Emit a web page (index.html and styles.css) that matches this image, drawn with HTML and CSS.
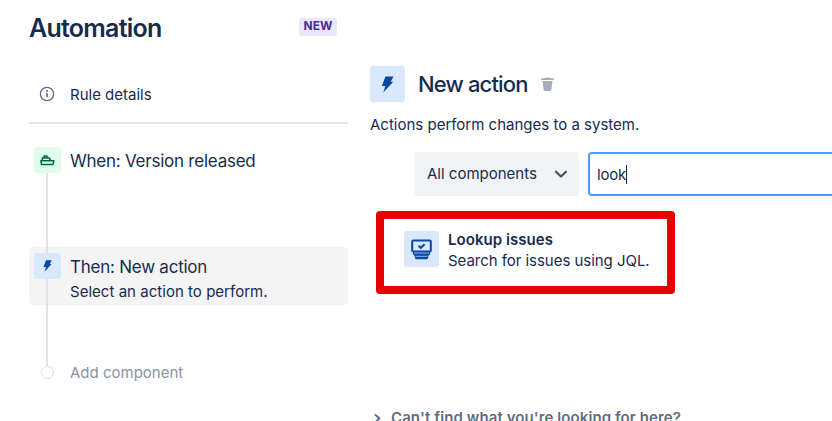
FILE: index.html
```
<!DOCTYPE html>
<html lang="en">
<head>
<meta charset="utf-8">
<title>Automation</title>
<link rel="stylesheet" href="styles.css">
</head>
<body>
<div class="app">
  <aside class="sidebar">
    <header class="heading"><h1><span>Automation</span></h1><span class="badge"><span>NEW</span></span></header>
    <div class="details">
      <svg class="info" viewBox="0 0 16 16"><circle cx="8" cy="8" r="6.6" fill="none" stroke="currentColor" stroke-width="1.3"/><circle cx="8" cy="5.1" r="1"/><rect x="7.2" y="7" width="1.7" height="4.2" rx=".6"/></svg>
      <span class="t-rule">Rule details</span>
    </div>
    <div class="steps">
      <div class="step trigger">
        <span class="tile green"><svg width="15" height="13" viewBox="0 0 15 13" fill="none" stroke="currentColor" stroke-width="1.5" stroke-linejoin="round"><path d="M.9 6.8h13l-.9 3.6H1.4zM2.3 6.5V4h6.9l1.7 2.6M4 4V2h2.8l1 2"/></svg></span>
        <span class="name t-when">When: Version released</span>
      </div>
      <div class="step action">
        <span class="tile blue"><svg width="9" height="12" viewBox="0 0 12 17"><path d="M4 .5h8L9.2 5.8h2.5L1.8 16.5l2-6.5H.3z"/></svg></span>
        <div class="copy"><span class="name t-then">Then: New action</span><span class="t-select">Select an action to perform.</span></div>
      </div>
      <div class="step add"><span class="dot"></span><span class="t-add">Add component</span></div>
    </div>
  </aside>
  <main class="content">
    <div class="title">
      <span class="tile large blue"><svg width="13" height="17" viewBox="0 0 12 17"><path d="M4 .5h8L9.2 5.8h2.5L1.8 16.5l2-6.5H.3z"/></svg></span>
      <h2><span>New action</span></h2>
      <svg class="trash" width="13" height="15" viewBox="0 0 13 15"><path d="M.9 1.3h3.4L5 .6h3l.7.7h3.4a.8.8 0 0 1 0 1.7H.9a.8.8 0 0 1 0-1.7zM1.5 4h10l-1.2 8.8a1.5 1.5 0 0 1-1.5 1.2H4.2a1.5 1.5 0 0 1-1.5-1.2z"/></svg>
    </div>
    <p class="intro"><span>Actions perform changes to a system.</span></p>
    <div class="filters">
      <div class="select"><span class="t-all">All components</span><svg width="14" height="9" viewBox="0 0 14 9" fill="none" stroke="currentColor" stroke-width="2.2" stroke-linecap="round" stroke-linejoin="round"><path d="M2 1.7l5 4.8 5-4.8"/></svg></div>
      <div class="search"><span class="t-look">look</span><i class="caret"></i></div>
    </div>
    <div class="result">
      <span class="tile large blue"><svg width="21" height="21" viewBox="0 0 21 21" fill="none" stroke="currentColor" stroke-width="2"><rect x="1.2" y="1.6" width="18.6" height="10.8" rx="1"/><path d="M7.6 6.8l2.2 2 3.8-3.6"/><path d="M2 13h17v1.8a1.5 1.5 0 0 1-1.4 1.5L17 19a1.6 1.6 0 0 1-1.5 1.3h-10A1.6 1.6 0 0 1 4 19l-.6-2.7A1.5 1.5 0 0 1 2 14.800z" fill="currentColor" stroke="none"/><path d="M3 14h15M4.500 17.300h12" stroke="#a9c3ee" stroke-width=".9"/></svg></span>
      <div class="copy"><strong class="t-lookup">Lookup issues</strong><span class="t-jql">Search for issues using JQL.</span></div>
    </div>
    <div class="help"><svg width="7" height="9" viewBox="0 0 7 9" fill="none" stroke="currentColor" stroke-width="1.9" stroke-linecap="round" stroke-linejoin="round"><path d="M1.5 1l4 3.5-4 3.5"/></svg><span class="t-help">Can't find what you're looking for here?</span></div>
  </main>
</div>
</body>
</html>
```

FILE: styles.css
```
* { box-sizing: border-box; }
body { margin: 0; background: #fff; color: #172b4d; font: 15px/20px Inter, sans-serif; overflow: hidden; }
h1, h2, p { margin: 0; }
svg { display: block; flex: none; }
span { white-space: nowrap; }
.app { display: flex; gap: 22px; height: 421px; padding-left: 29px; overflow: hidden; }
.sidebar { flex: none; width: 319px; }
.heading { display: flex; justify-content: space-between; padding: 12px 11px 0 0; height: 66px; }
h1 { font-size: 25px; line-height: 32px; font-weight: 600; letter-spacing: -.75px; }
.badge { margin-top: 6px; height: 18px; width: 38px; border-radius: 3px; background: #eae6ff; color: #403294; font-size: 12px; line-height: 16px; font-weight: 700; text-align: center; }
.details { display: flex; align-items: center; height: 58px; border-bottom: 2px solid #e6e6eb; padding-left: 10px; gap: 14px; }
.t-rule { padding: 2px 0 0 1px; }
.info { width: 16px; height: 16px; color: #5e6c84; fill: currentColor; }
.steps { position: relative; z-index: 0; padding-top: 23px; }
.steps::before { content: ""; position: absolute; left: 17px; top: 40px; width: 2px; height: 203px; background: #e2e2e8; }
.step { position: relative; display: flex; }
.tile { display: flex; flex: none; align-items: center; justify-content: center; width: 27px; height: 26px; border-radius: 3px; }
.tile svg:not([fill]) { fill: currentColor; }
.green { background: #dffcec; color: #006644; }
.blue { background: #d9e7ff; color: #0747a6; }
.large { width: 35px; height: 36px; }
.trigger { height: 100px; padding-left: 5px; gap: 9px; }
.name { font-size: 17px; line-height: 26px; letter-spacing: -.24px; }
.t-when { padding-top: 1px; }
.action { height: 58px; padding: 6px 5px; gap: 9px; }
.action::before { content: ""; position: absolute; inset: 0; background: #f4f4f4; border-radius: 4px; z-index: -1; }
.action .copy { padding-top: 1px; }
.copy { display: flex; flex-direction: column; }
.action .t-select { line-height: 23px; letter-spacing: .03px; }
.add { margin-top: 57px; padding-left: 12px; gap: 16px; align-items: center; color: #8993a4; height: 22px; }
.dot { width: 13px; height: 13px; margin-top: -2px; border: 1px solid #dcdee4; border-radius: 50%; background: #fff; }
.content { flex: 1; min-width: 0; padding-top: 66px; }
.title { display: flex; align-items: center; height: 36px; }
h2 { margin: 0 13px; font-size: 22px; line-height: 30px; font-weight: 500; letter-spacing: -.85px; }
.trash { fill: #a5adba; }
.intro { margin-top: 13px; }
.filters { display: flex; gap: 9px; margin: 17px 0 0 44px; height: 44px; }
.select { display: flex; flex: none; width: 165px; align-items: center; justify-content: space-between; padding: 0 11px 0 13px; border-radius: 3px; background: #f2f3f5; }
.select svg { color: #42526e; }
.search { flex: 1; margin-right: -8px; display: flex; align-items: center; padding-left: 7px; border: 2px solid #4c9aff; border-radius: 4px; }
.t-look { padding-top: 2px; letter-spacing: -.2px; }
.caret { width: 1px; height: 19px; background: #172b4d; }
.result { display: flex; gap: 9px; margin: 15px 0 0 6px; width: 299px; height: 83px; padding: 12px 20px; border: 8px solid #e60000; border-radius: 4px; }
.result .copy { margin-top: -2px; line-height: 21px; }
strong { font-weight: 600; letter-spacing: .05px; }
.t-jql { letter-spacing: -.04px; }
.help { display: flex; align-items: center; gap: 10px; margin: 114px 0 0 4px; color: #5e6c84; font-weight: 600; letter-spacing: .09px; }
```
